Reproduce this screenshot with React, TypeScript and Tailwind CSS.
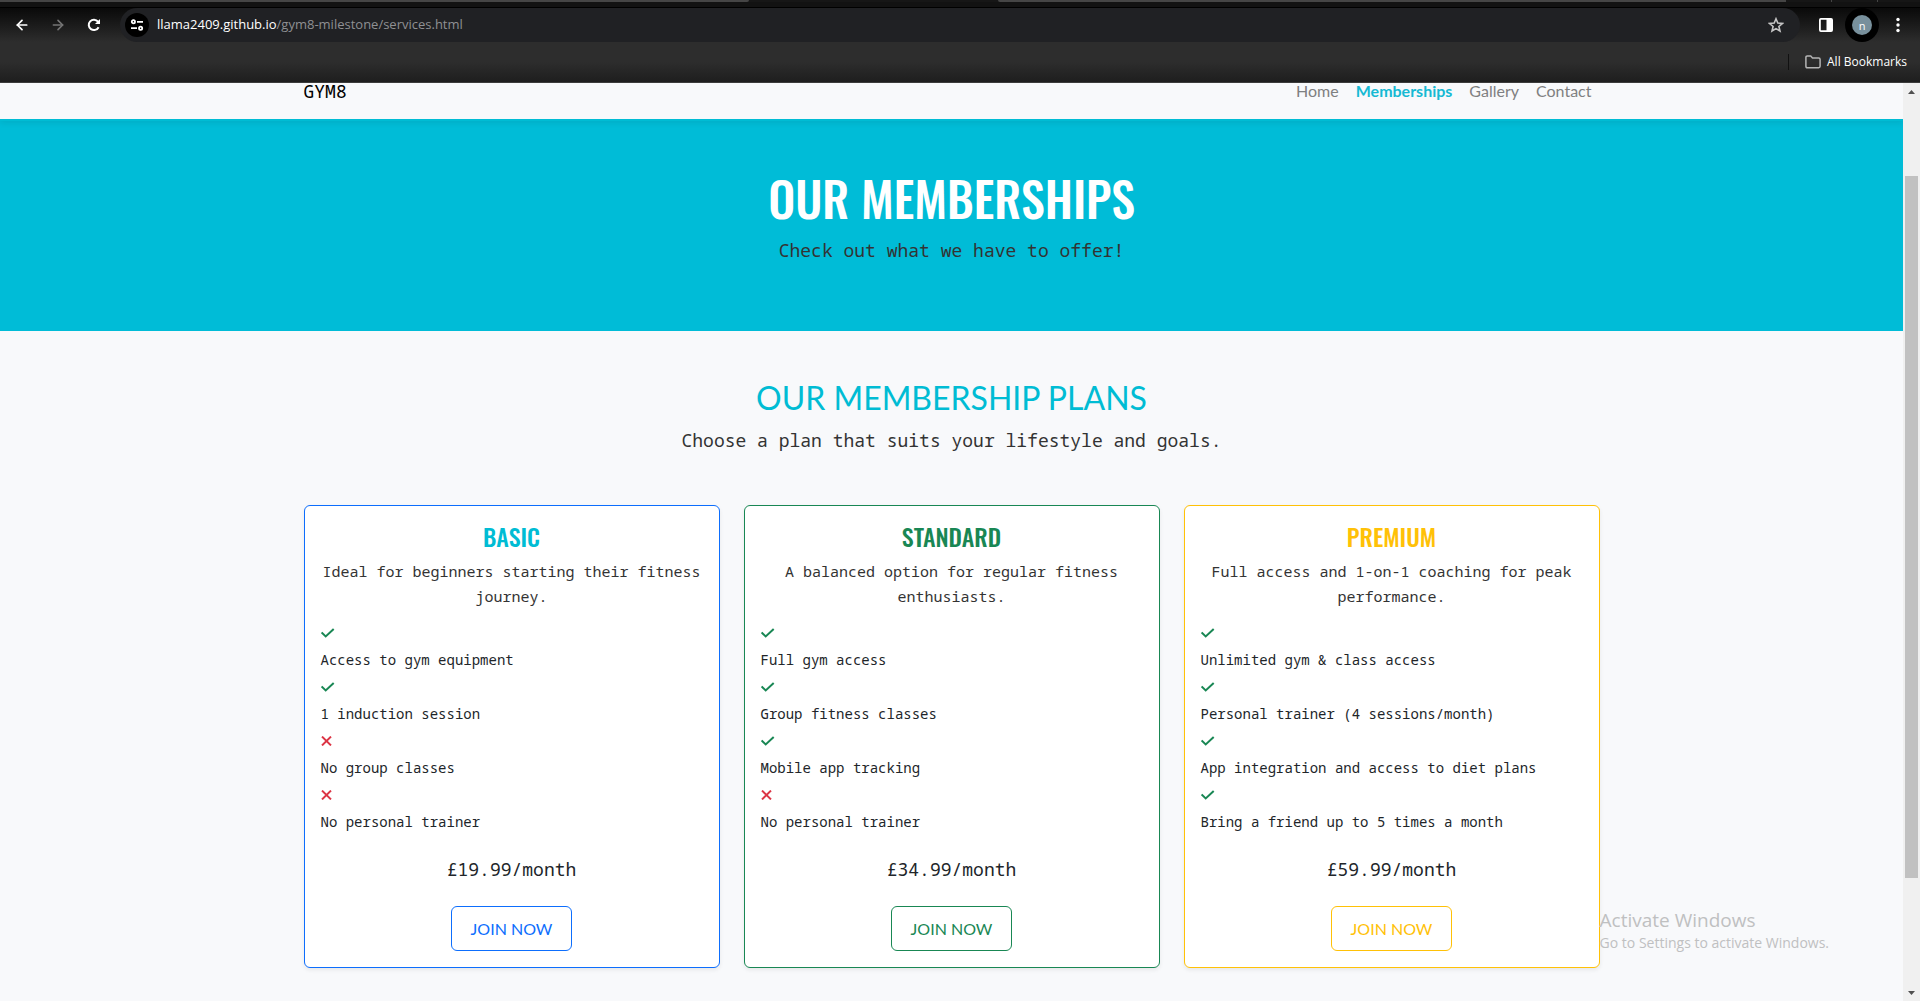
import { ArrowLeft, ArrowRight } from "lucide-react";

const MONO = "font-['Noto_Sans_Mono','DejaVu_Sans_Mono',monospace]";
const OSWALD = "font-['Oswald','Roboto_Condensed',sans-serif]";

type Feature = { ok: boolean; text: string };
type Plan = {
  name: string;
  blurb: string;
  features: Feature[];
  price: string;
  border: string;
  title: string;
  button: string;
};

const plans: Plan[] = [
  {
    name: "BASIC",
    blurb: "Ideal for beginners starting their fitness journey.",
    features: [
      { ok: true, text: "Access to gym equipment" },
      { ok: true, text: "1 induction session" },
      { ok: false, text: "No group classes" },
      { ok: false, text: "No personal trainer" },
    ],
    price: "£19.99/month",
    border: "border-[#0d6efd]",
    title: "text-[#00bcd4]",
    button: "border-[#0d6efd] text-[#0d6efd]",
  },
  {
    name: "STANDARD",
    blurb: "A balanced option for regular fitness enthusiasts.",
    features: [
      { ok: true, text: "Full gym access" },
      { ok: true, text: "Group fitness classes" },
      { ok: true, text: "Mobile app tracking" },
      { ok: false, text: "No personal trainer" },
    ],
    price: "£34.99/month",
    border: "border-[#198754]",
    title: "text-[#198754]",
    button: "border-[#198754] text-[#198754]",
  },
  {
    name: "PREMIUM",
    blurb: "Full access and 1-on-1 coaching for peak performance.",
    features: [
      { ok: true, text: "Unlimited gym & class access" },
      { ok: true, text: "Personal trainer (4 sessions/month)" },
      { ok: true, text: "App integration and access to diet plans" },
      { ok: true, text: "Bring a friend up to 5 times a month" },
    ],
    price: "£59.99/month",
    border: "border-[#ffc107]",
    title: "text-[#ffc107]",
    button: "border-[#ffc107] text-[#ffc107]",
  },
];

function BrowserBar() {
  return (
    <header className="shrink-0 border-b border-[#3c3c3c] bg-[#2d2d2d] font-['Open_Sans','Noto_Sans',sans-serif]">
      <div className="flex h-[2px] bg-[#161616]">
        <div className="w-[39%] rounded-br-sm bg-[#454545]" />
        <div className="w-[13%]" />
        <div className="w-[41%] rounded-bl-sm bg-[#454545]" />
        <div className="ml-[45px] w-px bg-[#454545]" />
        <div className="ml-[45px] w-px bg-[#454545]" />
      </div>
      <div className="h-[6px] border-b border-black bg-[#121212]" />
      <div className="flex h-[34px] items-center bg-linear-to-b from-[#0a0a0a] to-[#2d2d2d] pr-[14px] pl-[14px]">
        <button aria-label="Back" className="text-white">
          <ArrowLeft size={16} strokeWidth={2.6} />
        </button>
        <button aria-label="Forward" className="ml-5 text-[#757575]">
          <ArrowRight size={16} strokeWidth={2.4} />
        </button>
        <button aria-label="Reload" className="ml-5 text-white">
          <svg width="16" height="16" viewBox="0 0 16 16" fill="none" stroke="currentColor" strokeWidth="2">
            <path d="M12.6 10.2A5.2 5.2 0 1 1 12 4.6L13 5.8" />
            <path d="M14 2v5H9z" fill="currentColor" stroke="none" />
          </svg>
        </button>
        <div className="ml-[18px] flex h-[34px] flex-1 items-center rounded-full bg-[#202124] pr-4 pl-[5px]">
          <span className="flex size-6 shrink-0 items-center justify-center rounded-full bg-black text-white">
            <svg width="14" height="14" viewBox="0 0 14 14" fill="none" stroke="currentColor" strokeWidth="1.8">
              <circle cx="3.4" cy="3.8" r="1.6" />
              <path d="M7 3.8h6M1 10.2h6" />
              <circle cx="10.6" cy="10.2" r="1.6" />
            </svg>
          </span>
          <p className="ml-2 flex-1 text-[13px] text-[#8f9093]">
            <span className="text-white">llama2409.github.io</span>/gym8-milestone/services.html
          </p>
          <button aria-label="Bookmark this page" className="text-[#c4c4c4]">
            <svg width="16" height="16" viewBox="0 0 16 16" fill="none" stroke="currentColor" strokeWidth="1.6">
              <path d="M8 1.8l1.8 4.3 4.6.4-3.5 3 1.1 4.5L8 11.6 4 14l1.1-4.5-3.5-3 4.6-.4z" />
            </svg>
          </button>
        </div>
        <button aria-label="Side panel" className="ml-[18px] text-white">
          <svg width="16" height="16" viewBox="0 0 16 16">
            <rect x="1.9" y="1.9" width="12.2" height="12.2" rx="1" fill="none" stroke="currentColor" strokeWidth="1.8" />
            <path d="M8.5 2H14v12H8.5z" fill="currentColor" />
          </svg>
        </button>
        <button aria-label="Profile" className="ml-[11px] flex size-[34px] items-center justify-center rounded-full bg-black">
          <span className="flex size-5 items-center justify-center rounded-full bg-[#78909c] text-[11px] leading-none text-white">n</span>
        </button>
        <button aria-label="Menu" className="ml-[11px] text-white">
          <svg width="16" height="16" viewBox="0 0 16 16" fill="currentColor">
            <circle cx="8" cy="2.5" r="1.7" />
            <circle cx="8" cy="8" r="1.7" />
            <circle cx="8" cy="13.5" r="1.7" />
          </svg>
        </button>
      </div>
      <div className="flex h-10 items-center justify-end bg-linear-to-b from-[#2d2d2d] from-50% to-[#1e1e1e] pr-[13px]">
        <span className="h-4 w-px bg-[#111]" />
        <button className="ml-4 flex items-center gap-1.5 text-[12px] text-white">
          <svg width="16" height="14" viewBox="0 0 16 14" fill="none" stroke="#b4b4b4" strokeWidth="1.5">
            <path d="M.9 11.3V2.4q0-1.4 1.4-1.4h3.4l1.8 2h6.2q1.4 0 1.4 1.4v6.9q0 1.4-1.4 1.4H2.3q-1.4 0-1.4-1.4z" />
          </svg>
          All Bookmarks
        </button>
      </div>
    </header>
  );
}

function Mark({ ok }: { ok: boolean }) {
  return ok ? (
    <svg className="text-[#198754]" width="14" height="10" viewBox="0 0 14 10" fill="none" stroke="currentColor" strokeWidth="2">
      <path d="M.6 4.4l4.1 4L12.7 .9" />
    </svg>
  ) : (
    <svg className="text-[#dc3545]" width="11" height="10" viewBox="0 0 11 10" fill="none" stroke="currentColor" strokeWidth="2">
      <path d="M1 .6l9 8.8M10 .6L1 9.4" />
    </svg>
  );
}

function PlanCard({ plan }: { plan: Plan }) {
  return (
    <article className={`flex flex-col rounded-md border bg-white p-4 text-center text-[#212529] shadow-[0_2px_4px_rgba(0,0,0,0.075)] ${plan.border}`}>
      <h3 className={`${OSWALD} text-2xl leading-[29px] font-medium ${plan.title}`}>{plan.name}</h3>
      <p className={`${MONO} mt-2 text-[15px] leading-[25px] text-[#333]`}>{plan.blurb}</p>
      <ul className={`${MONO} mt-2.5 text-left text-[14px] leading-[27px]`}>
        {plan.features.map((f) => (
          <li key={f.text}>
            <span className="flex h-[27px] items-center">
              <Mark ok={f.ok} />
            </span>
            {f.text}
          </li>
        ))}
      </ul>
      <p className={`${MONO} mt-[22px] text-[18px] leading-6`}>{plan.price}</p>
      <button className={`mx-auto mt-[25px] h-[45px] rounded-md border px-[19px] text-[16px] leading-6 ${plan.button}`}>JOIN NOW</button>
    </article>
  );
}

function ScrollBar() {
  return (
    <div className="flex w-[17px] shrink-0 flex-col items-center bg-[#f0f0f0] py-[6px]" aria-hidden="true">
      <svg width="7" height="4" viewBox="0 0 7 4" className="mt-px" fill="#505050">
        <path d="M0 4L3.5 0 7 4z" />
      </svg>
      <div className="flex min-h-0 w-full flex-1 flex-col items-center">
        <div className="flex-[82]" />
        <div className="w-[13px] flex-[702] bg-[#c1c1c1]" />
        <div className="flex-[113]" />
      </div>
      <svg width="7" height="4" viewBox="0 0 7 4" fill="#505050">
        <path d="M0 0L3.5 4 7 0z" />
      </svg>
    </div>
  );
}

export default function App() {
  return (
    <div className="flex h-screen flex-col overflow-hidden font-['Lato',sans-serif]">
      <BrowserBar />
      <div className="flex min-h-0 flex-1">
        <div className="relative min-w-0 flex-1 overflow-hidden bg-[#f8f9fb]">
          <nav className="relative z-10 border-b-2 border-[#00bcd4] bg-[#f8f9fb] pb-5 shadow-[0_2px_6px_rgba(0,0,0,0.08)]">
            <div className="mx-auto flex max-w-[1320px] items-center justify-between pr-5 pl-3">
              <a href="#" className={`${MONO} text-[18px] leading-4 text-black`}>GYM8</a>
              <div className="flex gap-[17px] text-[16px] leading-4 text-[#7f8081]">
                <a href="#home">Home</a>
                <a href="#memberships" className="font-bold text-[#16b9d3]">Memberships</a>
                <a href="#gallery">Gallery</a>
                <a href="#contact">Contact</a>
              </div>
            </div>
          </nav>
          <section className="bg-[#00bcd7] pt-12 pb-[67px] text-center">
            <h1 className={`${OSWALD} text-5xl leading-[58px] font-medium text-white`}>OUR MEMBERSHIPS</h1>
            <p className={`${MONO} mt-[9px] text-[18px] leading-7 text-[#333]`}>Check out what we have to offer!</p>
          </section>
          <main className="mx-auto max-w-[1320px] px-3 pt-12">
            <h2 className="text-center text-[32px] leading-[38px] text-[#00bcd4]">OUR MEMBERSHIP PLANS</h2>
            <p className={`${MONO} mt-[7px] text-center text-[18px] leading-8 text-[#333]`}>
              Choose a plan that suits your lifestyle and goals.
            </p>
            <div className="mt-[49px] grid grid-cols-3 gap-6">
              {plans.map((p) => (
                <PlanCard key={p.name} plan={p} />
              ))}
            </div>
          </main>
          <aside className="absolute right-[74px] bottom-[47px] z-20 font-['Open_Sans','Noto_Sans',sans-serif] text-[#bfc0c1]">
            <p className="text-[19px] leading-6">Activate Windows</p>
            <p className="text-[14px] leading-[22px]">Go to Settings to activate Windows.</p>
          </aside>
        </div>
        <ScrollBar />
      </div>
    </div>
  );
}
